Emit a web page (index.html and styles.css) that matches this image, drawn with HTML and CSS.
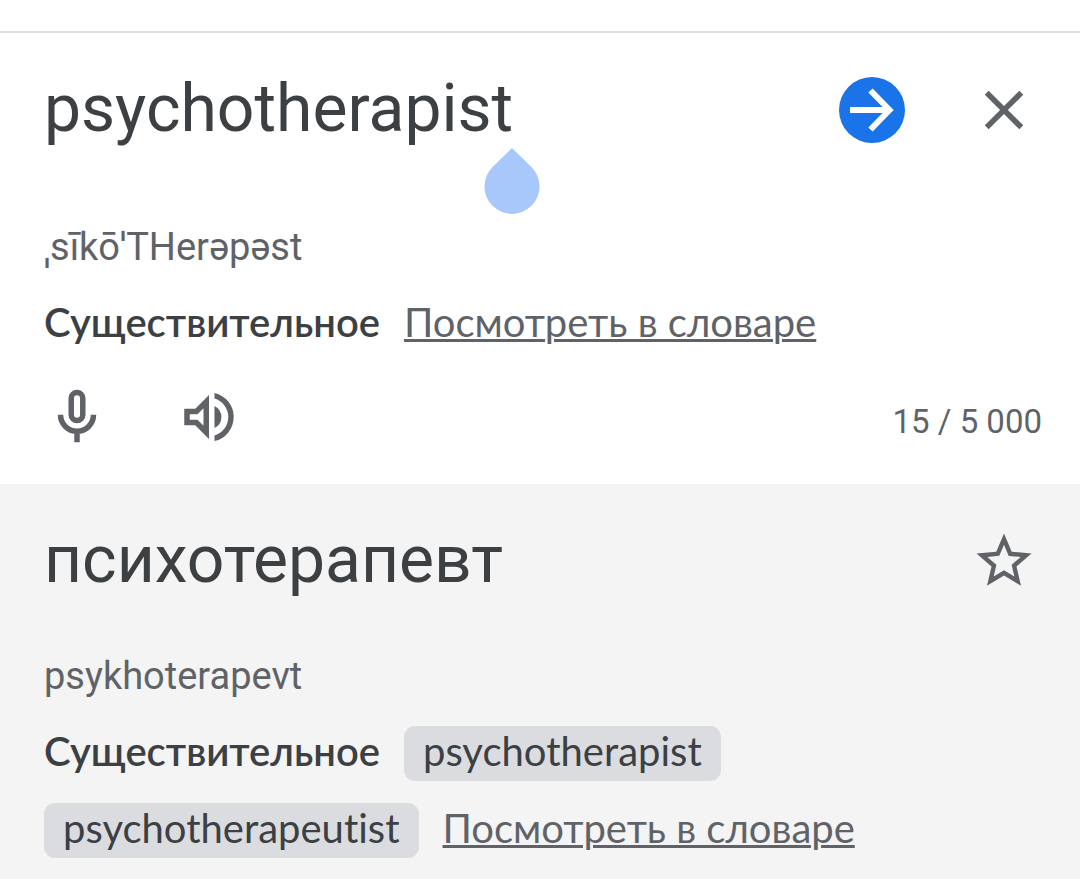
FILE: index.html
```html
<!DOCTYPE html>
<html lang="ru">
<head>
    <meta charset="UTF-8">
    <meta name="viewport" content="width=device-width, initial-scale=1.0">
    <link rel="stylesheet" href="styles.css">
    <title>Переводчик</title>
</head>
<body>

<section class="panel source">
    <div class="top-row">
        <div class="text-box">
            <textarea class="word" id="sourceText" rows="1" aria-label="Исходный текст" spellcheck="false">psychotherapist</textarea>
            <svg class="caret-handle" viewBox="0 0 56 66"><path d="M28 0 L47.500 19 A27.500 27.500 0 1 1 8.500 19 Z"/></svg>
        </div>
        <button class="icon-button go" aria-label="Перевести">
            <svg viewBox="0 0 66 66"><path d="M11 33h39M31.500 13.500l19 19.500-19 19.500"/></svg>
        </button>
        <button class="icon-button" id="clearButton" aria-label="Удалить текст">
            <svg viewBox="0 0 24 24"><path d="M19 6.41L17.59 5 12 10.59 6.41 5 5 6.41 10.59 12 5 17.59 6.41 19 12 13.41 17.59 19 19 17.59 13.41 12z"/></svg>
        </button>
    </div>

    <p class="phonetic"><span class="stress">ˌ</span>sīkō<span class="stress">ˈ</span>THerəpəst</p>

    <div class="meanings">
        <strong>Существительное</strong>
        <a href="#">Посмотреть в словаре</a>
    </div>

    <div class="tools">
        <button class="icon-button" aria-label="Голосовой ввод">
            <svg viewBox="0 0 24 24">
                <path class="line" d="M9.900 5.200a2.100 2.100 0 0 1 4.200 0v6a2.100 2.100 0 0 1-4.200 0z"/>
                <path class="line" d="M6 11.200a6 6 0 0 0 12 0M12 17v4.200"/>
            </svg>
        </button>
        <button class="icon-button" aria-label="Прослушать">
            <svg viewBox="0 0 24 24"><path d="M3 9v6h4l5 5V4L7 9H3zm7-.17v6.34L7.83 13H5v-2h2.83L10 8.83zM16.500 12A4.500 4.500 0 0 0 14 7.970v8.050A4.500 4.500 0 0 0 16.500 12zM14 3.230v2.060a7 7 0 0 1 0 13.420v2.060a9 9 0 0 0 0-17.540z"/></svg>
        </button>
        <span class="counter"><span id="count">15</span> / 5 000</span>
    </div>
</section>

<section class="panel result">
    <div class="top-row">
        <h1 class="word">психотерапевт</h1>
        <button class="icon-button" aria-label="Сохранить перевод">
            <svg viewBox="0 0 24 24"><path d="M22 9.240l-7.190-.62L12 2 9.190 8.630 2 9.240l5.460 4.730L5.820 21 12 17.270 18.180 21l-1.630-7.030L22 9.240zM12 15.400l-3.760 2.270 1-4.280-3.320-2.880 4.380-.38L12 6.100l1.710 4.040 4.380.38-3.320 2.880 1 4.280L12 15.400z"/></svg>
        </button>
    </div>

    <p class="phonetic">psykhoterapevt</p>

    <div class="meanings">
        <strong>Существительное</strong>
        <button class="chip">psychotherapist</button>
        <button class="chip">psychotherapeutist</button>
        <a href="#">Посмотреть в словаре</a>
    </div>
</section>

<script>
    const sourceText = document.getElementById('sourceText');

    function updateCount() {
        document.getElementById('count').textContent = sourceText.value.length;
    }

    sourceText.addEventListener('input', updateCount);

    document.getElementById('clearButton').addEventListener('click', function () {
        sourceText.value = '';
        updateCount();
    });
</script>

</body>
</html>
```
FILE: styles.css
```css
* {
    box-sizing: border-box;
}

body {
    margin: 0;
    padding-top: 31px;
    min-height: 100vh;
    display: flex;
    flex-direction: column;
    font-family: Roboto, sans-serif;
    color: #3c4043;
    background-color: #fff;
}

.panel {
    padding: 32px 38px 22px 44px;
}

.source {
    border-top: 2px solid #e0e0e0;
    padding-bottom: 34px;
}

.result {
    flex: 1;
    background-color: #f4f4f4;
}

.top-row {
    display: flex;
    align-items: flex-start;
    gap: 66px;
    padding-right: 5px;
}

.text-box {
    flex: 1;
    min-width: 0;
    position: relative;
}

.word {
    display: block;
    flex: 1;
    width: 100%;
    height: 88px;
    margin: 0;
    padding: 0;
    border: none;
    outline: none;
    resize: none;
    overflow: hidden;
    font-family: inherit;
    font-size: 66px;
    font-weight: 400;
    line-height: 88px;
    color: inherit;
    background: none;
}

/* Touch selection handle under the caret */
.caret-handle {
    position: absolute;
    top: 83px;
    left: 440px;
    width: 56px;
    height: 66px;
    fill: #a8c7fa;
}

.icon-button {
    flex: none;
    width: 66px;
    height: 66px;
    padding: 0;
    border: none;
    border-radius: 50%;
    background: none;
    color: #5f6368;
    cursor: pointer;
}

.icon-button svg {
    display: block;
    width: 66px;
    height: 66px;
    fill: currentColor;
}

.icon-button .line {
    fill: none;
    stroke: currentColor;
    stroke-width: 2;
}

.top-row .icon-button {
    margin-top: 12px;
}

.go {
    background-color: #1a73e8;
    color: #fff;
}

.go svg {
    fill: none;
    stroke: currentColor;
    stroke-width: 6;
}

.phonetic {
    margin: 45px 0 22px;
    font-size: 38px;
    line-height: 55px;
    color: #5f6368;
}

.source .phonetic {
    margin-top: 67px;
}

/* Narrow stress marks, kept from growing the line */
.stress {
    font-family: "Open Sans", "Noto Sans", sans-serif;
    line-height: 1;
}

.meanings {
    display: flex;
    flex-wrap: wrap;
    gap: 22px 24px;
    font-family: Lato, sans-serif;
    font-size: 40px;
    line-height: 50px;
    font-variant-ligatures: none;
}

.meanings strong {
    font-weight: 600;
}

.meanings a {
    color: #5f6368;
    text-decoration-thickness: 3px;
}

.meanings strong,
.meanings a {
    padding-bottom: 5px;
}

.chip {
    padding: 0 19px 5px;
    border: none;
    border-radius: 11px;
    font: inherit;
    font-variant-ligatures: none;
    color: inherit;
    background-color: #dadce0;
    cursor: pointer;
}

.tools {
    display: flex;
    align-items: center;
    gap: 66px;
    margin-top: 32px;
}

.tools .icon-button + .icon-button {
    margin-right: auto;
}

.counter {
    padding-top: 8px;
    font-size: 33px;
    color: #5f6368;
}
```
